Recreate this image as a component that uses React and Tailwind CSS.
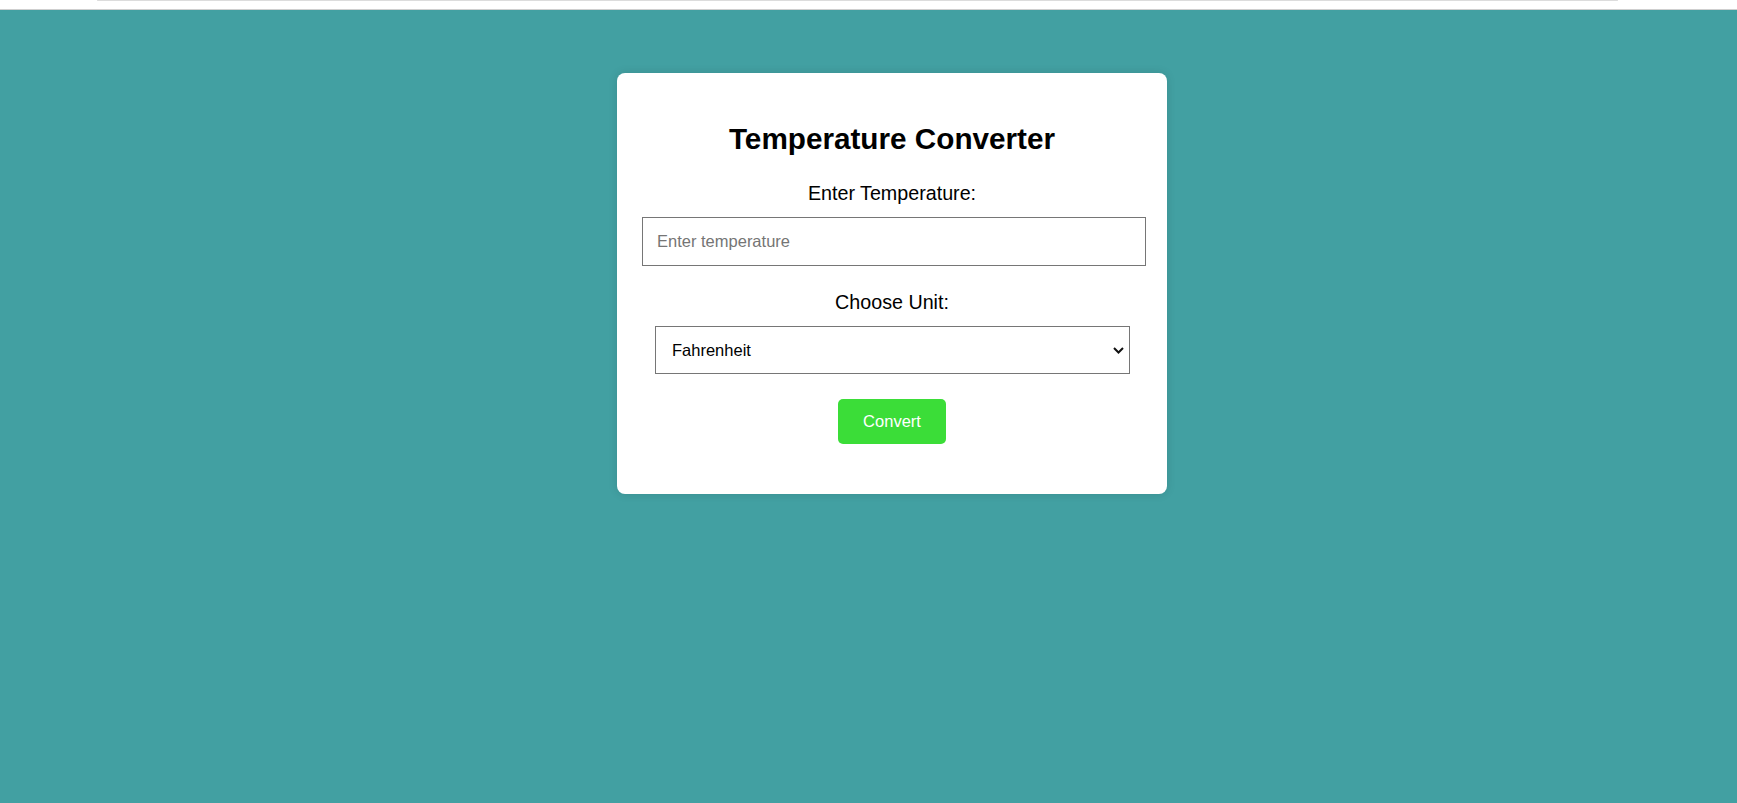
import React from "react";

export default function App() {
  return (
    <div className="min-h-screen bg-[#42a0a2] font-['Liberation_Sans',Arial,sans-serif]">
      <div className="h-[10px] bg-white border-b border-[#cfcfcf]">
        <div className="h-px ml-[97px] mr-[119px] bg-[#dcdcdc] rounded-full" />
      </div>
      <div className="pt-[63px]">
        <div className="ml-[617px] w-[550px] h-[421px] bg-white rounded-[8px] shadow-[0_0_10px_rgba(0,0,0,0.12)] pt-[48px] flex flex-col">
          <h1 className="text-center text-[29.7px] leading-[36px] font-bold text-black">
            Temperature Converter
          </h1>
          <label className="block mt-[23.5px] text-center text-[19.7px] leading-[24px] text-black">
            Enter Temperature:
          </label>
          <input
            type="number"
            placeholder="Enter temperature"
            className="mt-[12.5px] ml-[25px] w-[504px] h-[49px] border border-[#767676] pl-[14px] pr-[12px] text-[16.5px] text-black placeholder:text-[#757575] outline-none bg-white"
          />
          <label className="block mt-[24px] text-center text-[19.7px] leading-[24px] text-black">
            Choose Unit:
          </label>
          <div className="relative mt-[12px] ml-[38px] w-[475px] h-[48px]">
            <select
              defaultValue="fahrenheit"
              className="appearance-none w-full h-full border border-[#767676] pl-[16px] pr-[24px] text-[16.5px] text-black bg-white outline-none"
            >
              <option value="celsius">Celsius</option>
              <option value="fahrenheit">Fahrenheit</option>
              <option value="kelvin">Kelvin</option>
            </select>
            <svg
              className="absolute right-[6px] top-[21px] pointer-events-none"
              width="11"
              height="7"
              viewBox="0 0 11 7"
              fill="none"
            >
              <polyline points="1,1 5.5,5.5 10,1" stroke="#111" strokeWidth="2" />
            </svg>
          </div>
          <div className="mt-[25px] flex justify-center">
            <button className="w-[108px] h-[45px] rounded-[5px] bg-[#3bdd38] text-white text-[16.5px]">
              Convert
            </button>
          </div>
        </div>
      </div>
    </div>
  );
}
